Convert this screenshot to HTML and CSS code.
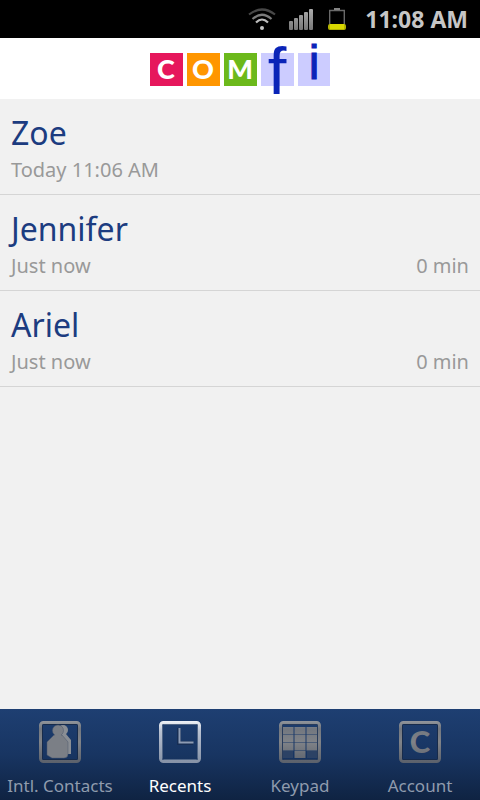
FILE: index.html
```html
<!DOCTYPE html>
<html lang="en">
<head>
    <meta charset="UTF-8">
    <meta name="viewport" content="width=device-width, initial-scale=1.0">
    <title>Comfi - Recents</title>
    <link rel="stylesheet" href="styles.css">
</head>
<body>
    <div class="status-bar">
        <svg class="wifi" width="28" height="24" viewBox="0 0 28 24" fill="none" stroke-width="2.2">
            <path d="M1 7.500Q14-2.500 27 7.500" stroke="#484848"/>
            <path d="M4.500 12Q14 3.500 23.500 12" stroke="#7c7c7c"/>
            <path d="M8 15.500Q14 9.500 20 15.500" stroke="#bdbdbd"/>
            <circle cx="14" cy="21" r="2" fill="#c4c4c4"/>
        </svg>
        <svg class="signal" width="25" height="24" viewBox="0 0 25 24">
            <defs>
                <linearGradient id="bars" x1="0" y1="0" x2="0" y2="24" gradientUnits="userSpaceOnUse">
                    <stop offset="0" stop-color="#b0b0b0"/>
                    <stop offset="1" stop-color="#747474"/>
                </linearGradient>
            </defs>
            <g fill="url(#bars)">
                <rect x="0" y="14" width="4" height="9" rx="1"/>
                <rect x="5" y="11" width="4" height="12" rx="1"/>
                <rect x="10" y="8" width="4" height="15" rx="1"/>
                <rect x="15" y="5" width="4" height="18" rx="1"/>
                <rect x="20" y="2" width="4" height="21" rx="1"/>
            </g>
        </svg>
        <svg class="battery" width="20" height="26" viewBox="0 0 20 26">
            <path d="M2.700 20V4.500H17.300V20" fill="none" stroke="#696969" stroke-width="1.400"/>
            <path d="M7 3H13" stroke="#858585" stroke-width="2"/>
            <rect x="1" y="18" width="18" height="6" rx="2" fill="#b3b300"/>
            <rect x="3" y="18" width="14" height="5" fill="#d9d800"/>
        </svg>
        <span class="time">11:08 AM</span>
    </div>

    <header class="header">
        <svg class="logo" width="180" height="56" viewBox="0 0 180 56" role="img" aria-label="Comfi">
            <rect x="0" y="13" width="33" height="33" fill="#e6175c"/>
            <rect x="37" y="13" width="33" height="33" fill="#ff9600"/>
            <rect x="74" y="13" width="33" height="33" fill="#6cb91b"/>
            <rect x="111" y="13" width="33" height="33" fill="#ccccff"/>
            <rect x="148" y="13" width="32" height="33" fill="#ccccff"/>
            <g class="logo-caps">
                <text x="16" y="39">C</text>
                <text x="53" y="39">O</text>
                <text x="90" y="39">M</text>
            </g>
            <text class="logo-f" x="127" y="54">f</text>
            <text class="logo-i" x="164" y="39">i</text>
        </svg>
    </header>

    <main class="content">
        <ul class="calls">
            <li>
                <a class="call" href="#zoe">
                    <span class="name">Zoe</span>
                    <span class="details"><span>Today 11:06 AM</span></span>
                </a>
            </li>
            <li>
                <a class="call" href="#jennifer">
                    <span class="name">Jennifer</span>
                    <span class="details"><span>Just now</span><span>0 min</span></span>
                </a>
            </li>
            <li>
                <a class="call" href="#ariel">
                    <span class="name">Ariel</span>
                    <span class="details"><span>Just now</span><span>0 min</span></span>
                </a>
            </li>
        </ul>
    </main>

    <nav class="tabs">
        <a class="tab" href="#contacts">
            <svg width="44" height="44" viewBox="0 0 44 44">
                <defs>
                    <linearGradient id="metal" x1="0" y1="0" x2="0" y2="44" gradientUnits="userSpaceOnUse">
                        <stop offset="0" stop-color="#95999f"/>
                        <stop offset="0.200" stop-color="#72777f"/>
                        <stop offset="0.500" stop-color="#808388"/>
                        <stop offset="1" stop-color="#595f6a"/>
                    </linearGradient>
                    <linearGradient id="silver" x1="0" y1="0" x2="0" y2="44" gradientUnits="userSpaceOnUse">
                        <stop offset="0" stop-color="#f4f6fa"/>
                        <stop offset="0.250" stop-color="#b9c2d2"/>
                        <stop offset="1" stop-color="#8490a5"/>
                    </linearGradient>
                </defs>
                <rect x="2.500" y="2.500" width="39" height="39" rx="3" fill="none" stroke="url(#metal)" stroke-width="3"/>
                <rect x="4.500" y="4.500" width="35" height="35" rx="1" fill="none" stroke="#172b4b" stroke-width="1"/>
                <g fill="#8a8e94">
                    <circle cx="25" cy="10" r="5"/>
                    <path d="M20 14H28L33 20V34H30L28 30H20Z"/>
                </g>
                <g fill="#7b7f86" stroke="#4c586c" stroke-width="0.500">
                    <path d="M16 15H24L30 22V34Q30 38 26 38H14L9 35V22Z"/>
                    <circle cx="20" cy="10.500" r="5.500"/>
                </g>
                <path d="M17 13H23V18H17Z" fill="#7b7f86"/>
            </svg>
            <span>Intl. Contacts</span>
        </a>
        <a class="tab active" href="#recents" aria-current="page">
            <svg width="44" height="44" viewBox="0 0 44 44">
                <rect x="2.500" y="2.500" width="39" height="39" rx="3" fill="none" stroke="url(#silver)" stroke-width="3"/>
                <rect x="4.500" y="4.500" width="35" height="35" rx="1" fill="none" stroke="#506585" stroke-width="1"/>
                <path d="M21 8V23H35" fill="none" stroke="#172e55" stroke-width="4"/>
                <path d="M21.500 8V22.500H35.500" fill="none" stroke="#8d9bb3" stroke-width="2"/>
            </svg>
            <span>Recents</span>
        </a>
        <a class="tab" href="#keypad">
            <svg width="44" height="44" viewBox="0 0 44 44">
                <rect x="2.500" y="2.500" width="39" height="39" rx="3" fill="none" stroke="url(#metal)" stroke-width="3"/>
                <rect x="4.500" y="4.500" width="35" height="35" rx="1" fill="none" stroke="#293c5b" stroke-width="1"/>
                <g fill="url(#metal)">
                    <rect x="5" y="7" width="10.500" height="7.500"/>
                    <rect x="16.500" y="7" width="11" height="7.500"/>
                    <rect x="28.500" y="7" width="10.500" height="7.500"/>
                    <rect x="5" y="15" width="10.500" height="7.500"/>
                    <rect x="16.500" y="15" width="11" height="7.500"/>
                    <rect x="28.500" y="15" width="10.500" height="7.500"/>
                    <rect x="5" y="23" width="10.500" height="7.500"/>
                    <rect x="16.500" y="23" width="11" height="7.500"/>
                    <rect x="28.500" y="23" width="10.500" height="7.500"/>
                    <rect x="16.500" y="31" width="11" height="7"/>
                </g>
                <g fill="#2c4265">
                    <rect x="5" y="31" width="10" height="7"/>
                    <rect x="29" y="31" width="10" height="7"/>
                </g>
            </svg>
            <span>Keypad</span>
        </a>
        <a class="tab" href="#account">
            <svg width="44" height="44" viewBox="0 0 44 44">
                <rect x="2.500" y="2.500" width="39" height="39" rx="3" fill="none" stroke="url(#metal)" stroke-width="3"/>
                <rect x="4.500" y="4.500" width="35" height="35" rx="1" fill="none" stroke="#172b4b" stroke-width="1"/>
                <text class="account-letter" x="22" y="33">C</text>
            </svg>
            <span>Account</span>
        </a>
    </nav>
</body>
</html>
```
FILE: styles.css
```css
* {
    box-sizing: border-box;
}

body {
    font-family: 'Noto Sans', 'Open Sans', sans-serif;
    background: #f1f1f1;
    margin: 0;
    display: flex;
    flex-direction: column;
    min-height: 100vh;
}

svg {
    display: block;
    overflow: visible;
}

.status-bar {
    display: flex;
    align-items: center;
    justify-content: flex-end;
    gap: 13px;
    height: 38px;
    padding-right: 12px;
    background: #000;
}

.time {
    margin-left: 5px;
    color: #c6c6c6;
    font-size: 23px;
    line-height: 32px;
    font-weight: bold;
}

.header {
    display: flex;
    justify-content: center;
    padding: 2px 0 3px;
    background: #fff;
}

.logo-caps {
    font-family: Lato, sans-serif;
    font-size: 27px;
    font-weight: 900;
    fill: #fff;
    text-anchor: middle;
}

.logo-f,
.logo-i {
    font-family: 'Liberation Sans', sans-serif;
    fill: #0a24b8;
    text-anchor: middle;
}

.logo-f {
    font-size: 67px;
}

.logo-i {
    font-size: 48px;
    stroke: #0a24b8;
    stroke-width: 1px;
}

.content {
    flex: 1;
}

.calls {
    list-style: none;
    margin: 0;
    padding: 0;
}

.call {
    display: block;
    padding: 12px 11px 9px;
    border-bottom: 1px solid #d5d5d5;
    text-decoration: none;
}

.name {
    display: block;
    color: #1c3c80;
    font-size: 32px;
    line-height: 44px;
}

.details {
    display: flex;
    justify-content: space-between;
    color: #999;
    font-size: 20px;
    line-height: 30px;
}

.tabs {
    display: flex;
    background: linear-gradient(#1e3f72, #183562 50%, #0f2342);
}

.tab {
    flex: 1 0 0;
    display: flex;
    flex-direction: column;
    align-items: center;
    gap: 10px;
    padding: 11px 0 2px;
    color: #8f9bad;
    font-size: 17px;
    line-height: 24px;
    text-decoration: none;
    white-space: nowrap;
}

.tab.active {
    color: #fff;
}

.account-letter {
    font-family: Lato, sans-serif;
    font-size: 31px;
    font-weight: 900;
    fill: url(#metal);
    text-anchor: middle;
}
```
